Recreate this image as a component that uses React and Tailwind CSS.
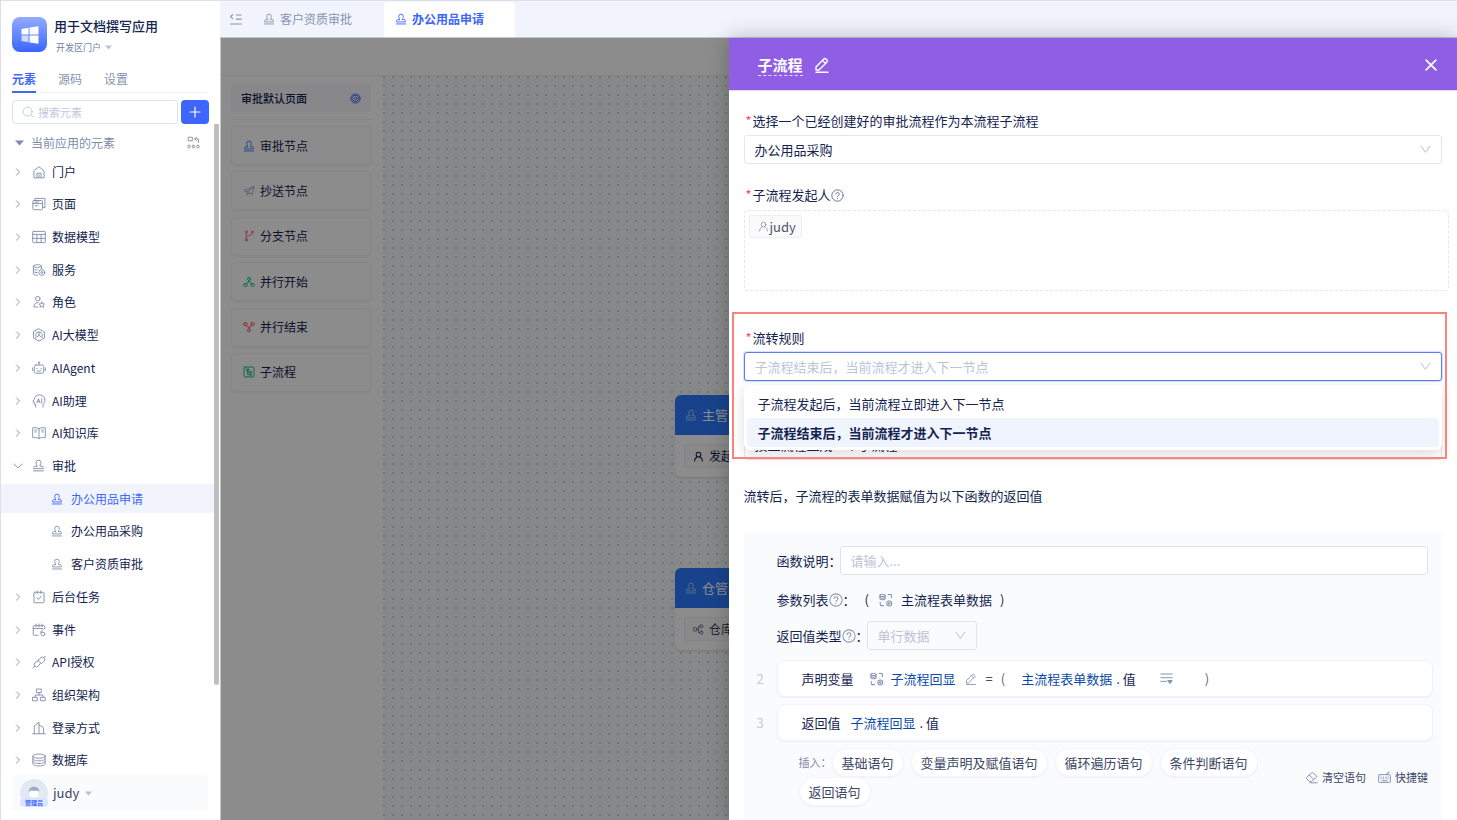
import { useState } from "react";

const Icon = ({ size = 14, className = "", sw = 1.2, children }) => (
  <svg
    width={size}
    height={size}
    viewBox="0 0 16 16"
    fill="none"
    stroke="currentColor"
    strokeWidth={sw}
    strokeLinecap="round"
    strokeLinejoin="round"
    className={"shrink-0 " + className}
    aria-hidden="true"
  >
    {children}
  </svg>
);

const Stamp = (p) => (
  <Icon {...p}>
    <path d="M6.3 8.8C6.3 7.4 4.9 6.7 4.9 4.6a3.1 3.1 0 0 1 6.2 0c0 2.1-1.4 2.8-1.4 4.2h2.5c1 0 1.6.6 1.6 1.5v1.6H2.2v-1.6c0-.9.6-1.5 1.6-1.5z" />
    <path d="M1.8 14.6h12.4" />
  </Icon>
);

const Help = (p) => (
  <Icon {...p}>
    <circle cx="8" cy="8" r="7" />
    <path d="M5.9 6.3a2.1 2.1 0 1 1 3.2 1.8c-.7.4-1.1.8-1.1 1.5M8 11.7v.2" />
  </Icon>
);

const Pencil = (p) => (
  <Icon {...p}>
    <path d="M2 13v-3l7.8-8.1a1.4 1.4 0 0 1 2 0l1.2 1.2a1.4 1.4 0 0 1 0 2L5 13zM8.6 3.5l3 3M2 15.3h12" />
  </Icon>
);

const User = (p) => (
  <Icon {...p}>
    <circle cx="8" cy="5.2" r="3.4" />
    <path d="M2.2 14.5c.4-3.4 2.4-5.4 4-5.9M13.8 14.5c-.4-3.4-2.4-5.4-4-5.9" />
  </Icon>
);

const ChevronDown = (p) => (
  <Icon {...p}>
    <path d="M2.5 4 8 11.5 13.5 4" />
  </Icon>
);

const Variable = (p) => (
  <Icon {...p}>
    <ellipse cx="4" cy="2.8" rx="3" ry="1.3" />
    <path d="M1 2.8v3.6c0 .8 1.3 1.3 3 1.3s3-.5 3-1.3V2.8M1 4.6c0 .8 1.3 1.3 3 1.3s3-.5 3-1.3" />
    <path d="M10.5 1.8h2.7q1 0 1 1v2.4M1.4 10.5v2.7q0 1.2 1.2 1.2H5" />
    <circle cx="11.7" cy="12" r="2.8" />
    <circle cx="11.7" cy="12" r=".9" />
  </Icon>
);

const icons = {
  home: (
    <>
      <path d="M2.2 14.2V6.6L8 2l5.8 4.6v7.6zM5.6 14.2V9.4h4.8v4.8M8 11v3" />
    </>
  ),
  pages: (
    <>
      <rect x="1" y="4" width="11" height="10.5" rx="1" />
      <path d="M3.4 4V1.6h11.4V12H12M1 7.4h11M3.6 10h3M3.4 5.7h4" />
    </>
  ),
  table: (
    <>
      <rect x=".8" y="1.6" width="14.4" height="12.8" rx=".8" />
      <path d="M.8 5h14.4M.8 9.6h14.4M5.6 5v9.4M10.4 5v9.4" />
    </>
  ),
  service: (
    <>
      <path d="M1.6 3.5C1.6 2.6 3.6 2 6.2 2s4.6.6 4.6 1.5v3M1.6 3.5c0 .9 2 1.5 4.6 1.5s4.6-.6 4.6-1.5M1.6 3.5v9c0 .9 2 1.5 4.6 1.5M1.6 6.5C1.6 7.4 3.6 8 6.2 8M1.6 9.5c0 .9 2 1.5 4.6 1.5" />
      <circle cx="11.2" cy="10.8" r="3.4" />
      <circle cx="11.2" cy="10.8" r="1.1" />
    </>
  ),
  role: (
    <>
      <circle cx="6.6" cy="4.2" r="2.6" />
      <path d="M7 8.6c-3 0-4.8 2-4.8 5.2h4.2M11.2 8l1 2 2.2.3-1.6 1.5.4 2.2-2-1-2 1 .4-2.2L8 10.3l2.2-.3z" />
    </>
  ),
  cube: (
    <>
      <path d="M8 1 14.2 4.5v7L8 15l-6.2-3.5v-7z" />
      <path d="M8 4.5v4M8 8.5l4 2.5M8 8.5 4 11M5 5.8l3-1.5 3 1.5M4.4 7v2.2M11.6 7v2.2" />
    </>
  ),
  robot: (
    <>
      <rect x="2.6" y="4.6" width="10.8" height="9.4" rx="1.8" />
      <path d="M8 4.6V2M.8 7.8v3.4M15.2 7.8v3.4M5.6 8.4v.6M10.4 8.4v.6M6 11.4q2 1 4 0" />
      <circle cx="8" cy="1.6" r=".7" />
    </>
  ),
  head: (
    <>
      <path d="M4.2 15v-2.8H2.6V9.4L1 8.6 2.6 6C3 3 5.2 1 8.4 1c3.8 0 6.4 2.6 6.4 6 0 2.4-1 3.8-2.2 5V15" />
      <path d="m5.6 10.2 1.8-4.8 1.8 4.8M6.2 8.6h2.4M11.2 5.4v4.8" />
    </>
  ),
  book: (
    <>
      <path d="M8 3C6.4 1.8 3.6 1.6.8 2v11.4c2.8-.4 5.6-.2 7.2 1 1.6-1.2 4.4-1.4 7.2-1V2C12.4 1.6 9.6 1.8 8 3zM8 3v11.4" />
      <path d="M3.2 4.6h2.2M3.2 6.8h1.6M10.8 4.6h2.2M11.4 6.8H13" />
    </>
  ),
  task: (
    <>
      <rect x="2.2" y="2.6" width="11.6" height="12" rx=".8" />
      <path d="M6 1v3M10 1v3M5.4 8.8l2 2 3.4-3.8" />
    </>
  ),
  event: (
    <>
      <path d="M7 14H2.6q-1.2 0-1.2-1.2V4.2Q1.4 3 2.6 3h10.8q1.2 0 1.2 1.2v2.2M1.4 6.2h11M4.6 1.2v3M8 1.2v3M11.4 1.2v3" />
      <circle cx="12.4" cy="12.6" r="2.2" />
      <path d="m12.6 7.6-3 3h2" />
    </>
  ),
  plug: (
    <>
      <path d="M8.6 4.6 10 3.2a2.6 2.6 0 0 1 3.8 0 2.6 2.6 0 0 1 0 3.8l-3 3-4-4zM7.2 6.6l-3.6 2a3 3 0 0 0-.6 4.2 3 3 0 0 0 4.4-.4l2-2.6M3 12.8l-2 2M13.6 3.2l1.6-1.8" />
    </>
  ),
  org: (
    <>
      <rect x="5.4" y="1.2" width="5.2" height="4" />
      <rect x="1" y="10.6" width="5" height="4" />
      <rect x="10" y="10.6" width="5" height="4" />
      <path d="M8 5.2V8M3.5 10.6V8h9v2.6" />
    </>
  ),
  building: (
    <>
      <path d="M.8 14.6h14.4M2.6 14.6V5.4L8 1.4v13.2M8 4.4l5.2 3.4v6.8" />
    </>
  ),
  db: (
    <>
      <ellipse cx="8" cy="3.6" rx="7" ry="2.4" />
      <path d="M1 3.6v8.8c0 1.3 3.1 2.4 7 2.4s7-1.1 7-2.4V3.6M1 6.6C1 7.9 4.1 9 8 9s7-1.1 7-2.4M1 9.6C1 10.9 4.1 12 8 12s7-1.1 7-2.4" />
    </>
  ),
  send: (
    <>
      <path d="M14.6 2 1.4 7.6l4 1.8L14.6 2l-2.2 10.6-4.4-2.2M5.4 9.4v4l2.6-3" />
    </>
  ),
  branch: (
    <>
      <circle cx="4.4" cy="2.6" r="1.5" />
      <circle cx="4.4" cy="13.4" r="1.5" />
      <circle cx="12.4" cy="2.8" r="1.5" />
      <path d="M4.4 4.2v7.6M12.4 4.4c0 3.6-8 2-8 6" />
    </>
  ),
  parallel: (
    <>
      <circle cx="8" cy="3.8" r="2" />
      <rect x=".8" y="10.4" width="5" height="3.4" rx="1.5" />
      <rect x="10.2" y="10.4" width="5" height="3.4" rx="1.5" />
      <path d="M8 5.8v2M3.4 10.4 8 7.4l4.6 3" />
    </>
  ),
  merge: (
    <>
      <circle cx="8" cy="12.4" r="2" />
      <rect x=".8" y="2.4" width="5" height="3.4" rx="1.5" />
      <rect x="10.2" y="2.4" width="5" height="3.4" rx="1.5" />
      <path d="M8 10.4v-2M3.4 5.8 8 8.8l4.6-3" />
    </>
  ),
  sub: (
    <>
      <rect x="1.4" y="1.4" width="13.2" height="13.2" rx="1" />
      <path d="M4.8 4h3v2h-3zM6.2 6v5.500h2.500M6.200 8.500h2.500M9.500 7.500h2v1.500h-2zM9.500 11h2v1.200h-2z" />
    </>
  ),
};

const menu = [
  { name: "门户", icon: "home" },
  { name: "页面", icon: "pages" },
  { name: "数据模型", icon: "table" },
  { name: "服务", icon: "service" },
  { name: "角色", icon: "role" },
  { name: "AI大模型", icon: "cube" },
  { name: "AIAgent", icon: "robot" },
  { name: "AI助理", icon: "head" },
  { name: "AI知识库", icon: "book" },
  { name: "审批", open: true },
  { name: "办公用品申请", child: true, active: true },
  { name: "办公用品采购", child: true },
  { name: "客户资质审批", child: true },
  { name: "后台任务", icon: "task" },
  { name: "事件", icon: "event" },
  { name: "API授权", icon: "plug" },
  { name: "组织架构", icon: "org" },
  { name: "登录方式", icon: "building" },
  { name: "数据库", icon: "db" },
];

const palette = [
  { name: "审批节点", color: "text-[#2f7bff]" },
  { name: "抄送节点", icon: "send", color: "text-[#a4acc4]" },
  { name: "分支节点", icon: "branch", color: "text-[#ff5c93]" },
  { name: "并行开始", icon: "parallel", color: "text-[#12c87c]" },
  { name: "并行结束", icon: "merge", color: "text-[#ff4d4f]" },
  { name: "子流程", icon: "sub", color: "text-[#12b87c]" },
];

function MenuItem({ item }) {
  if (item.child) {
    return (
      <button
        className={
          item.active
            ? "mr-[5px] flex h-[29px] items-center gap-2 bg-[#f1f4fc] pl-[50px] text-[#3d66ff]"
            : "mr-[5px] flex h-[29px] items-center gap-2 pl-[50px]"
        }
      >
        <Stamp size={12} className={item.active ? "" : "text-[#8593b0]"} />
        {item.name}
      </button>
    );
  }
  return (
    <button className="mr-[5px] flex h-[29px] items-center pl-3">
      <Icon size={10} className="mr-2 text-[#8593b0]" sw={1.5}>
        {item.open ? <path d="m1.5 5 6.5 6 6.5-6" /> : <path d="m5.5 3 5 5-5 5" />}
      </Icon>
      <span className="mr-[6px] flex w-[15px] justify-center text-[#8593b0]">
        {item.icon ? <Icon size={14} sw={1.1}>{icons[item.icon]}</Icon> : <Stamp size={13} />}
      </span>
      {item.name}
    </button>
  );
}

function Sidebar() {
  return (
    <aside className="relative flex w-[220px] shrink-0 flex-col border-l border-[#dcdfe6] bg-white">
      {/* App title */}
      <div className="mt-4 flex h-[35px] items-center gap-[7px] pl-[11px]">
        <div className="flex size-[35px] items-center justify-center rounded-lg bg-linear-to-b from-[#93abff] to-[#3c62ff]">
          <svg width="18" height="18" viewBox="0 0 18 18" fill="#fff" aria-hidden="true">
            <path d="M.5 3 7.6 1.8v6.7H.5zM8.6 1.6 17.5.2v8.3H8.6z" />
            <path d="M.5 9.5h7.1v6.7L.5 15z" opacity=".7" />
            <path d="M8.6 9.5h8.9v8.3l-8.9-1.4z" />
          </svg>
        </div>
        <div className="flex flex-col gap-0.5 pt-1">
          <h1 className="text-[13px] leading-5 font-medium">用于文档撰写应用</h1>
          <button className="flex items-center gap-1 pl-[2px] text-[9px] leading-5 text-[#6f7fa0]">
            开发区门户
            <svg width="7" height="5" viewBox="0 0 7 5" fill="#b9c2da" aria-hidden="true">
              <path d="M0 .5h7L3.5 4.5z" />
            </svg>
          </button>
        </div>
      </div>

      {/* Tabs */}
      <nav className="mt-[13px] mr-[11px] ml-[11px] flex h-7 gap-[22px] border-b border-[#edf0f5] text-xs leading-7 text-[#8593b0]">
        <button className="-mb-px border-b-2 border-[#3d66ff] font-bold text-[#3d66ff]">元素</button>
        <button>源码</button>
        <button>设置</button>
      </nav>

      <div className="mt-[7px] mr-[11px] ml-[11px] flex h-6 gap-[3px]">
        <label className="flex min-w-0 flex-1 items-center gap-1 rounded-sm border border-[#dde2ee] px-[9px] text-[#c0c7dc]">
          <Icon size={12}>
            <circle cx="7.5" cy="7.5" r="6" />
            <path d="m12 12 2.5 2.5" />
          </Icon>
          <input
            aria-label="搜索元素"
            placeholder="搜索元素"
            className="w-full min-w-0 text-[11px] outline-none placeholder:text-[#c0c7dc]"
          />
        </label>
        <button aria-label="新建" className="flex w-7 items-center justify-center rounded-sm bg-[#3d66ff] text-white">
          <Icon size={12} sw={1.6}>
            <path d="M8 1.5v13M1.5 8h13" />
          </Icon>
        </button>
      </div>

      <div className="mt-1 mr-5 ml-[14px] flex h-[29px] items-center text-xs text-[#7e8dac]">
        <svg width="9" height="6" viewBox="0 0 9 6" fill="currentColor" className="mr-[7px]" aria-hidden="true">
          <path d="M0 .5h9L4.5 5.5z" />
        </svg>
        <span className="flex-1">当前应用的元素</span>
        <Icon size={13} className="text-[#8593b0]">
          <rect x="2" y="1.5" width="4.5" height="4.5" />
          <path d="M9.5 3.5H14V8M11.5 1.5l-2 2 2 2" />
          <rect x="1" y="11.5" width="3" height="3" rx="1" />
          <rect x="6.5" y="11.5" width="3" height="3" rx="1" />
          <rect x="12" y="11.5" width="3" height="3" rx="1" />
        </Icon>
      </div>

      <div className="flex min-h-0 flex-1 flex-col justify-between text-xs">
        {menu.map((item) => (
          <MenuItem key={item.name} item={item} />
        ))}
      </div>

      {/* Scrollbar thumb */}
      <div className="absolute top-[123px] right-px h-[561px] w-[5px] rounded-b-sm bg-[#bfbfbf]" />

      {/* Current user */}
      <button className="mr-3 mb-[9px] ml-[11px] flex h-9 items-center rounded-sm bg-[#fafbfd] pl-2 text-[13px] text-[#3b4766]">
        <span className="mr-[5px] flex size-7 flex-col items-center justify-end rounded-full bg-[#e3e9f3]">
          <svg width="12" height="12" viewBox="0 0 12 12" aria-hidden="true">
            <path d="M1.5 6a4.5 5 0 0 1 9 0v4q-4.5 3-9 0z" fill="#fff" />
            <path d="M.8 6.5C.5 3 2.5.8 6 .8s5.500 2.200 5.200 5.700L10 4.800H2z" fill="#9fabc5" />
          </svg>
          <span className="w-7 rounded-sm bg-[#dbe4ff] text-center text-[6px] leading-[9px] font-bold text-[#3d66ff]">管理员</span>
        </span>
        judy
        <svg width="7" height="5" viewBox="0 0 7 5" fill="#b9c2da" className="ml-[6px]" aria-hidden="true">
          <path d="M0 .5h7L3.5 4.5z" />
        </svg>
      </button>
    </aside>
  );
}

function FlowNode({ title, className, children }) {
  return (
    <div className={"absolute w-40 overflow-hidden rounded-md bg-white shadow-sm " + className}>
      <div className="flex h-10 items-center gap-[5px] bg-[#2d7bff] px-[10px] text-[13px] text-white">
        <Stamp size={12} className="opacity-60" />
        {title}
      </div>
      <div className="m-[9px] flex h-6 items-center gap-[5px] border border-[#eceef4] bg-[#fafafa] px-2 text-xs">
        {children}
      </div>
    </div>
  );
}

function Designer() {
  return (
    <div className="flex h-full flex-col">
      <div className="h-[38px] shrink-0 border-b border-[#eceff5] bg-white" />
      <div className="flex min-h-0 flex-1">
        <div className="w-[162px] shrink-0 bg-white pt-2 pr-3 pl-[10px]">
          <div className="flex h-7 items-center justify-between rounded-sm bg-[#f7f8fb] px-[10px] text-[11px] font-medium">
            审批默认页面
            <Icon size={11} className="text-[#3d66ff]" sw={1.3}>
              <circle cx="8" cy="8" r="6.8" />
              <circle cx="8" cy="8" r="2" />
              <path d="M5.500 3.600h5L13 8l-2.500 4.400h-5L3 8z" />
            </Icon>
          </div>
          <div className="mt-[7px] flex h-[273px] flex-col justify-between border-t border-[#f3f4f8] pt-[6px]">
            {palette.map((p) => (
              <button key={p.name} className="flex h-[39px] items-center gap-[5px] rounded-sm border border-[#f1f3f8] px-[11px] text-xs shadow-xs">
                {p.icon ? (
                  <Icon size={12} className={p.color}>{icons[p.icon]}</Icon>
                ) : (
                  <Stamp size={12} className={p.color} />
                )}
                {p.name}
              </button>
            ))}
          </div>
        </div>
        <div className="relative flex-1 overflow-hidden bg-[#f5f7fa] bg-[radial-gradient(circle_at_1px_1px,#ced2d9_1px,transparent_1px)] bg-[size:9px_9px]">
          <FlowNode title="主管" className="top-[319px] left-[292px]">
            <User size={11} sw={1.5} />
            发起
          </FlowNode>
          <FlowNode title="仓管" className="top-[492px] left-[292px]">
            <Icon size={11} className="text-[#5f6b88]">
              <rect x="1" y="5.5" width="4.5" height="4.5" />
              <rect x="10" y="1.5" width="4.5" height="4" rx="1.5" />
              <rect x="10" y="10.5" width="4.5" height="4" rx="1.5" />
              <path d="M5.5 8H8M10 3.5H8v9h2" />
            </Icon>
            <span className="text-[#3b4255]">仓库</span>
          </FlowNode>
        </div>
      </div>
    </div>
  );
}

function Label({ htmlFor, required, children }) {
  return (
    <label htmlFor={htmlFor} className="flex h-5 items-center text-[13px] leading-5">
      {required && <span className="mr-px ml-[2px] text-[#ff4d4f]">*</span>}
      {children}
    </label>
  );
}

const fieldClass =
  "h-[29px] w-full appearance-none rounded-[3px] border px-[10px] text-[13px] outline-none";

const rules = ["子流程发起后，当前流程立即进入下一节点", "子流程结束后，当前流程才进入下一节点"];

function Arrow() {
  return <ChevronDown size={13} className="pointer-events-none absolute top-2 right-[10px] text-[#b3bdd6]" />;
}

function FunctionPanel() {
  const chips = ["基础语句", "变量声明及赋值语句", "循环遍历语句", "条件判断语句", "返回语句"];
  return (
    <section className="mt-[26px] min-h-0 flex-1 bg-[#fafbfd] pt-[14px] pr-[9px] pl-[33px] text-[13px]">
      <div className="mr-[5px] flex items-center">
        <label htmlFor="desc" className="w-[63px] shrink-0 whitespace-nowrap">函数说明：</label>
        <input
          id="desc"
          placeholder="请输入..."
          className="h-[29px] min-w-0 flex-1 rounded-[3px] border border-[#dfe3ee] bg-white px-[10px] outline-none placeholder:text-[#bcc3da]"
        />
      </div>

      <div className="mt-[15px] flex h-5 items-center">
        参数列表
        <Help size={14} className="text-[#8d99b5]" />
        <span className="w-[22px]">：</span>
        <span className="mr-[10px]">(</span>
        <Variable size={14} className="mr-2 text-[#8593b0]" />
        主流程表单数据
        <span className="ml-2">)</span>
      </div>

      <div className="mt-[11px] flex items-center">
        <label htmlFor="ret">返回值类型</label>
        <Help size={14} className="text-[#8d99b5]" />
        <span className="w-[11px] whitespace-nowrap">：</span>
        <div className="relative w-[110px]">
          <select id="ret" disabled className={fieldClass + " border-[#dfe3ee] bg-[#fafbfd] text-[#bcc3da] opacity-100"}>
            <option>单行数据</option>
          </select>
          <Arrow />
        </div>
      </div>

      {/* Statements */}
      <ol className="mt-[10px] flex flex-col gap-[7px]">
        <li className="-ml-5 flex items-center">
          <span className="w-5 text-[#c3cade]">2</span>
          <div className="flex h-[37px] flex-1 items-center rounded-lg border border-[#f1f3f8] bg-white pl-6 shadow-xs">
            声明变量
            <Variable size={14} className="mr-[7px] ml-4 text-[#8593b0]" />
            <span className="text-[#0c4aa8]">子流程回显</span>
            <Pencil size={12} className="mx-[9px] text-[#8593b0]" />
            <span className="mr-2">=</span>
            <span className="mr-4 text-[#5d6a88]">(</span>
            <span className="text-[#0c4aa8]">主流程表单数据</span>
            <span className="ml-1">. 值</span>
            <Icon size={13} className="mr-8 ml-6 text-[#8593b0]">
              <path d="M1 2.5h14M1 7h14M1 11.5h7" />
              <path d="M10 10.5h5l-2.5 3.5z" fill="currentColor" />
            </Icon>
            <span className="text-[#5d6a88]">)</span>
          </div>
        </li>
        <li className="-ml-5 flex items-center">
          <span className="w-5 text-[#c3cade]">3</span>
          <div className="flex h-[37px] flex-1 items-center rounded-lg border border-[#f1f3f8] bg-white pl-6 shadow-xs">
            返回值
            <span className="ml-[10px] text-[#0c4aa8]">子流程回显</span>
            <span className="ml-1">. 值</span>
          </div>
        </li>
      </ol>

      <div className="mt-[7px] flex items-center pr-[5px] pl-[22px]">
        <div className="flex flex-1 flex-wrap items-center gap-x-[7px]">
          <span className="-mr-[7px] w-[33px] text-[11px] whitespace-nowrap text-[#7e8aa6]">插入：</span>
          {chips.map((c) => (
            <button key={c} className="h-[29px] rounded-full border border-[#f3f5fa] bg-white px-[9px] text-[#3b4766] shadow-xs">
              {c}
            </button>
          ))}
        </div>
        <div className="flex shrink-0 gap-3 text-[11px] text-[#3b4766]">
          <button className="flex items-center gap-1">
            <Icon size={13} className="text-[#8593b0]">
              <path d="M5 12.5 1.8 9.4q-.6-.7 0-1.4L8.400 2.200q.7-.6 1.400 0l4.400 4q.6.7 0 1.400L8.500 12.500zM5.200 5.200l5.600 5.200M6 14.500h9" />
            </Icon>
            清空语句
          </button>
          <button className="flex items-center gap-1">
            <Icon size={13} className="text-[#8593b0]">
              <rect x=".8" y="4.5" width="14.4" height="9.5" rx="1" />
              <path d="M3.5 7.5h.5M6.5 7.5H7M9.5 7.5h.5M12 7.5h.5M3.5 9.5h.5M6.5 9.5H7M9.5 9.5h.5M12 9.5h.5M5 12h6M11 4.5V3q0-.8 1-.8h1.5V1" />
            </Icon>
            快捷键
          </button>
        </div>
      </div>
    </section>
  );
}

function Drawer() {
  const [rule, setRule] = useState(1);

  return (
    <div className="absolute inset-y-0 right-0 flex w-[50vw] flex-col overflow-hidden bg-white shadow-[0_0_20px_rgba(0,0,0,0.25)]">
      <header className="flex h-[52px] shrink-0 items-center bg-[#8f5ee4] pt-0.5 pr-5 pl-[29px] text-white">
        <h2 className="mr-[11px] border-b border-dashed border-white/80 text-[15px] leading-5 font-bold">子流程</h2>
        <button aria-label="重命名"><Pencil size={16} className="block" sw={1.4} /></button>
        <button aria-label="关闭" className="ml-auto">
          <Icon size={12} className="block" sw={2.2}>
            <path d="m1.5 1.5 13 13M14.5 1.5l-13 13" />
          </Icon>
        </button>
      </header>

      <div className="flex min-h-0 flex-1 flex-col border-t border-[#e4daf8] px-[15px] pt-5">
        <Label htmlFor="flow" required>选择一个已经创建好的审批流程作为本流程子流程</Label>
        <div className="relative mt-1">
          <select id="flow" className={fieldClass + " border-[#e3e6f0] bg-white"}>
            <option>办公用品采购</option>
          </select>
          <Arrow />
        </div>

        <div className="mt-[21px]">
          <Label required>
            子流程发起人
            <Help size={13} className="text-[#66738f]" />
          </Label>
        </div>
        <div className="mt-[5px] -mr-[7px] flex h-[81px] shrink-0 items-start rounded-sm border border-dashed border-[#e3e6f0] p-1">
          <span className="flex h-[23px] items-center gap-px rounded-xs border border-[#eceef3] bg-[#fafafa] pr-[5px] pl-2 text-[13px] text-[#4a5470]">
            <User size={11} className="text-[#8593b0]" />
            judy
          </span>
        </div>

        {/* Transition rule, list open */}
        <div className="relative mt-[37px]">
          <Label htmlFor="rule" required>流转规则</Label>
          <div className="relative mt-1">
            <select
              id="rule"
              value={rule}
              onChange={(e) => setRule(Number(e.target.value))}
              className={fieldClass + " border-[#5c7cf5] bg-white text-[#bcc3da] ring-1 ring-[#3d66ff]/20"}
            >
              {rules.map((r, i) => (
                <option key={r} value={i}>{r}</option>
              ))}
            </select>
            <Arrow />
            <ul className="absolute inset-x-0 top-[33px] z-10 rounded-md bg-white p-[3px] pt-1 text-[13px] leading-[29px] shadow-[0_4px_14px_rgba(0,0,0,0.14)]">
              {rules.map((r, i) => (
                <li key={r}>
                  <button
                    onClick={() => setRule(i)}
                    className={
                      i === rule
                        ? "block w-full rounded-sm bg-[#f0f4fe] px-[11px] text-left font-bold"
                        : "block w-full px-[11px] text-left"
                    }
                  >
                    {r}
                  </button>
                </li>
              ))}
            </ul>
          </div>
          <select aria-label="生成方式" className={fieldClass + " mt-[50px] block border-[#e3e6f0] bg-white pb-0.5"}>
            <option>按主流程生成一个子流程</option>
          </select>
          <div className="pointer-events-none absolute -top-4 -right-[5px] bottom-px -left-3 z-20 border-2 border-[#fb837e]" />
        </div>

        <p className="mt-[26px] text-[13px] leading-5">流转后，子流程的表单数据赋值为以下函数的返回值</p>
        <FunctionPanel />
      </div>
    </div>
  );
}

export default function App() {
  return (
    <div className="flex h-screen overflow-hidden border-t border-[#dcdfe6] bg-white font-['Noto_Sans_CJK_SC',sans-serif] text-[#142450]">
      <Sidebar />
      <main className="flex min-w-0 flex-1 flex-col">
        <div className="flex h-9 shrink-0 items-center bg-[#f1f4fc] text-xs text-[#8593b0]">
          <button aria-label="收起" className="ml-[9px] w-6">
            <Icon size={13} sw={1.4}>
              <path d="M4.5 2 2 4.5 4.5 7M9 2.5h6M9 7.5h6M2 13.5h13" />
            </Icon>
          </button>
          <button className="flex h-full w-[131px] items-center gap-[5px] px-[10px] pb-px">
            <Stamp size={12} />
            客户资质审批
          </button>
          <button className="mt-px flex h-full w-[131px] items-center gap-[5px] rounded-t-sm bg-white px-[11px] pb-[2px] font-bold text-[#3d66ff]">
            <Stamp size={12} />
            办公用品申请
          </button>
        </div>
        <div className="relative min-h-0 flex-1 border-t border-l border-[#c4c6cc]">
          <Designer />
          <div className="absolute inset-0 bg-black/45" />
          <Drawer />
        </div>
      </main>
    </div>
  );
}
